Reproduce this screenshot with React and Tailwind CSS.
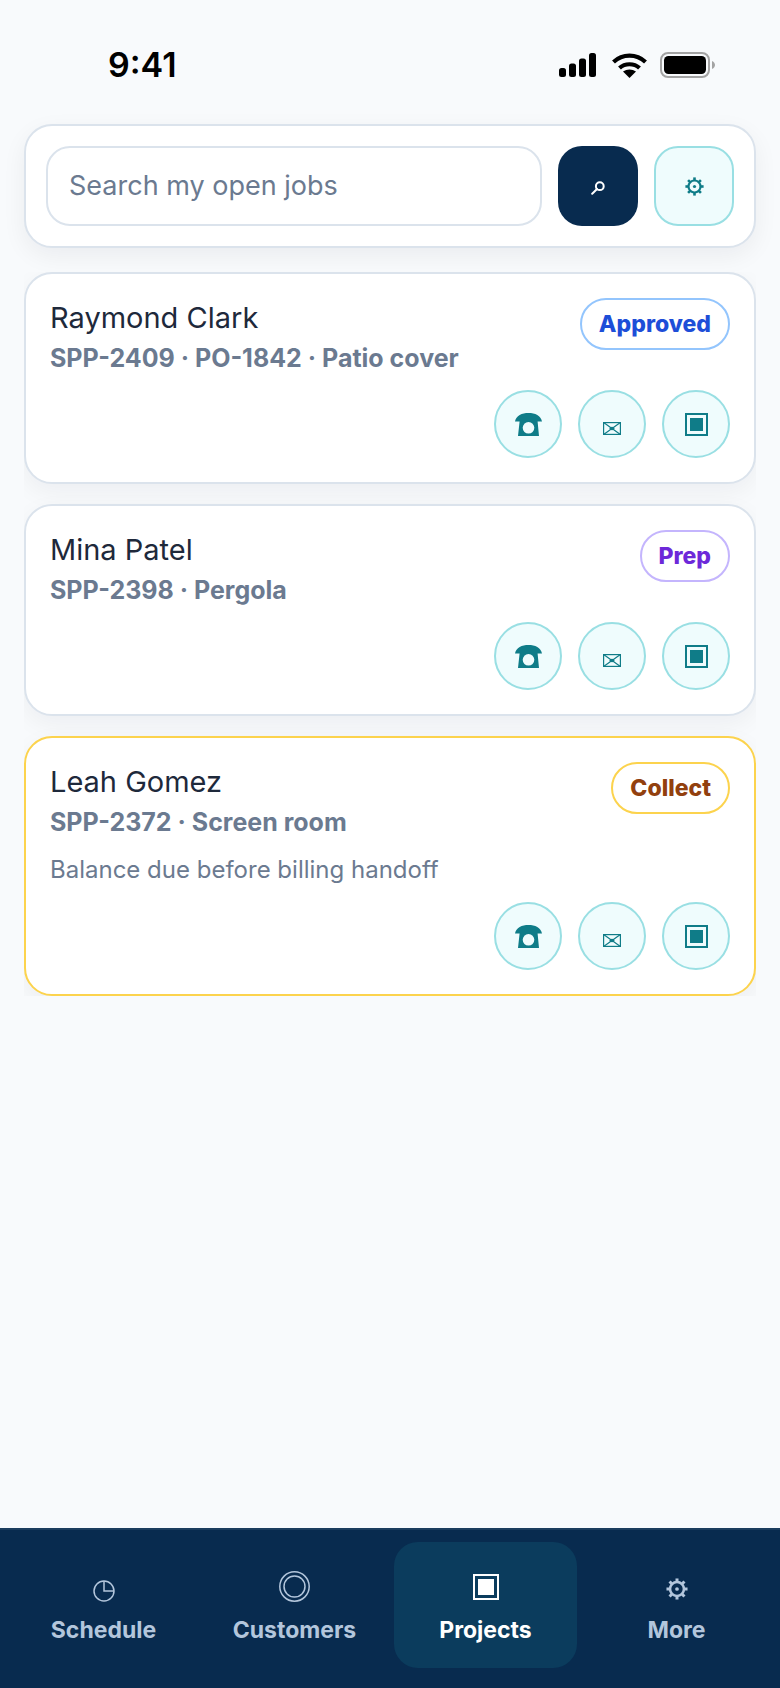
const jobs = [
  { name: 'Raymond Clark', meta: 'SPP-2409 · PO-1842 · Patio cover', badge: 'Approved', badgeClass: 'border-[#93c5fd] text-[#1d4ed8]', border: 'border-[#dbe3ec]' },
  { name: 'Mina Patel', meta: 'SPP-2398 · Pergola', badge: 'Prep', badgeClass: 'border-[#c4b5fd] text-[#6d28d9]', border: 'border-[#dbe3ec]' },
  { name: 'Leah Gomez', meta: 'SPP-2372 · Screen room', note: 'Balance due before billing handoff', badge: 'Collect', badgeClass: 'border-[#fcd34d] text-[#92400e]', border: 'border-[#fcd34d]' },
];

const PhoneIcon = () => (
  <svg width="27" height="23" viewBox="0 0 27 23" fill="currentColor">
    <path d="M0 8.5 C1 2.5 7 0 13.5 0 C20 0 26 2.5 27 8.5 L22.6 8.5 L24 23 L3 23 L4.6 8.5 Z" />
    <circle cx="13.5" cy="14.8" r="5.8" fill="#effcfd" />
  </svg>
);

const MailIcon = () => (
  <svg width="18" height="13" viewBox="0 0 18 13" fill="none" stroke="currentColor" strokeWidth="1.2" className="mt-[8px]">
    <rect x="0.6" y="0.6" width="16.8" height="11.8" />
    <path d="M0.6 0.6 L17.4 12.4 M17.4 0.6 L0.6 12.4" />
    <ellipse cx="9" cy="6.5" rx="2.6" ry="1.7" fill="currentColor" stroke="none" />
  </svg>
);

const SquareIcon = ({ size = 23, inset = 5 }) => (
  <svg width={size} height={size} viewBox={`0 0 ${size} ${size}`} fill="currentColor">
    <rect x="1" y="1" width={size - 2} height={size - 2} fill="none" stroke="currentColor" strokeWidth="2" />
    <rect x={inset} y={inset} width={size - inset * 2} height={size - inset * 2} />
  </svg>
);

const GearIcon = ({ size = 19 }) => (
  <svg width={size} height={size} viewBox="0 0 19 19" fill="none" stroke="currentColor">
    <circle cx="9.5" cy="9.5" r="6" strokeWidth="2.2" />
    <circle cx="9.5" cy="9.5" r="1.6" fill="currentColor" stroke="none" />
    {[0, 45, 90, 135, 180, 225, 270, 315].map((deg) => (
      <line key={deg} x1="9.5" y1="0.4" x2="9.5" y2="3.4" strokeWidth="2.6" transform={`rotate(${deg} 9.5 9.5)`} />
    ))}
  </svg>
);

const SearchIcon = () => (
  <svg width="14" height="14" viewBox="0 0 14 14" fill="none" stroke="currentColor" strokeWidth="2" strokeLinecap="round" className="mt-[3px]">
    <circle cx="8.8" cy="5.2" r="3.9" />
    <path d="M6 8 L1.2 12.8" />
  </svg>
);

const ClockIcon = () => (
  <svg width="22" height="22" viewBox="0 0 22 22" fill="none" stroke="currentColor" strokeWidth="1.5">
    <circle cx="11" cy="11" r="10" />
    <path d="M11 1 L11 11 L21 11" />
  </svg>
);

const TargetIcon = () => (
  <svg width="31" height="31" viewBox="0 0 31 31" fill="none" stroke="currentColor" strokeWidth="1.5">
    <circle cx="15.5" cy="15.5" r="14.7" />
    <circle cx="15.5" cy="15.5" r="10.5" />
  </svg>
);

const tabs = [
  { label: 'Schedule', icon: <ClockIcon /> },
  { label: 'Customers', icon: <TargetIcon /> },
  { label: 'Projects', icon: <SquareIcon size={26} inset={5} />, raised: true, active: true },
  { label: 'More', icon: <GearIcon size={22} />, raised: true },
];

const StatusBar = () => (
  <div className="h-[124px] shrink-0 flex items-start justify-between pt-[45px] pl-[108px] pr-[64px]">
    <span className="text-[34px] leading-[40px] font-semibold text-black">9:41</span>
    <div className="flex items-center mt-[7px]">
      <svg width="37" height="24" viewBox="0 0 37 24" fill="black">
        <rect x="0" y="15" width="7" height="9" rx="2.5" />
        <rect x="10" y="10.5" width="7" height="13.5" rx="2.5" />
        <rect x="20" y="5.5" width="7" height="18.5" rx="2.5" />
        <rect x="30" y="0" width="7" height="24" rx="2.5" />
      </svg>
      <svg width="35" height="25" viewBox="0 0 35 25" fill="none" stroke="black" strokeWidth="4.2" className="ml-[16px]">
        <path d="M1.5 9 C10.5 0.5 24.5 0.5 33.5 9" />
        <path d="M7.5 15 C13 10 22 10 27.5 15" />
        <path d="M17.5 25 L11 18.5 C15 15.8 20 15.8 24 18.5 Z" fill="black" stroke="none" />
      </svg>
      <svg width="56" height="26" viewBox="0 0 56 26" className="ml-[13px]">
        <rect x="1" y="1" width="48" height="24" rx="7" fill="none" stroke="#a3a3a3" strokeWidth="2" />
        <rect x="4" y="4" width="42" height="18" rx="4.5" fill="black" />
        <path d="M52 9 C54 10 55 11.5 55 13 C55 14.5 54 16 52 17 Z" fill="#a3a3a3" />
      </svg>
    </div>
  </div>
);

const ActionButton = ({ children }) => (
  <button className="w-[68px] h-[68px] rounded-full border-2 border-[#99dfe3] bg-[#effcfd] text-[#0f7c88] flex items-center justify-center">
    {children}
  </button>
);

const JobCard = ({ job }) => (
  <div className={`bg-white border-2 ${job.border} rounded-[28px] p-[24px] shadow-[0_8px_24px_rgba(15,23,42,0.05)]`}>
    <div className="flex justify-between items-start">
      <div>
        <div className="text-[29px] leading-[40px] text-[#1e293b]">{job.name}</div>
        <div className="text-[25px] leading-[32px] mt-[4px] font-bold text-[#6b7a90]">{job.meta}</div>
        {job.note && <div className="text-[24px] leading-[32px] mt-[16px] text-[#6b7a90]">{job.note}</div>}
      </div>
      <span className={`h-[52px] px-[17px] rounded-full border-2 bg-white flex items-center text-[23px] font-extrabold ${job.badgeClass}`}>
        {job.badge}
      </span>
    </div>
    <div className="flex justify-end gap-[16px] mt-[16px]">
      <ActionButton><PhoneIcon /></ActionButton>
      <ActionButton><MailIcon /></ActionButton>
      <ActionButton><SquareIcon /></ActionButton>
    </div>
  </div>
);

const App = () => (
  <div className="w-[780px] h-[1688px] bg-[#f8fafc] flex flex-col overflow-hidden font-['Inter',sans-serif]">
    <StatusBar />
    <div className="mx-[24px] bg-white border-2 border-[#dbe3ec] rounded-[28px] p-[20px] flex gap-[16px] shadow-[0_8px_24px_rgba(15,23,42,0.06)]">
      <div className="flex-1 h-[80px] rounded-[24px] border-2 border-[#dbe3ec] bg-white flex items-center px-[21px] text-[27px] text-[#6b7a90]">
        Search my open jobs
      </div>
      <button className="w-[80px] h-[80px] rounded-[24px] bg-[#082b4f] text-white flex items-center justify-center"><SearchIcon /></button>
      <button className="w-[80px] h-[80px] rounded-[24px] border-2 border-[#99dfe3] bg-[#effcfd] text-[#0f7c88] flex items-center justify-center"><GearIcon /></button>
    </div>
    <div className="mt-[24px] mx-[24px] flex flex-col gap-[20px] overflow-hidden">
      {jobs.map((job) => <JobCard key={job.name} job={job} />)}
    </div>
    <div className="mt-auto h-[160px] bg-[#082b4f] border-t-2 border-t-[#1b3d5e] grid grid-cols-4 gap-[8px] px-[12px] pt-[12px] pb-[20px]">
      {tabs.map((tab) => (
        <div key={tab.label} className={`flex flex-col items-center justify-center gap-[13px] rounded-[24px] ${tab.active ? 'bg-[#0b3c5d] text-white' : 'text-[#b3c6dc]'}`}>
          <span className={`h-[36px] flex items-end ${tab.raised ? 'pb-[2px]' : ''}`}>{tab.icon}</span>
          <span className="text-[23px] leading-[30px] font-bold">{tab.label}</span>
        </div>
      ))}
    </div>
  </div>
);

export default App;
